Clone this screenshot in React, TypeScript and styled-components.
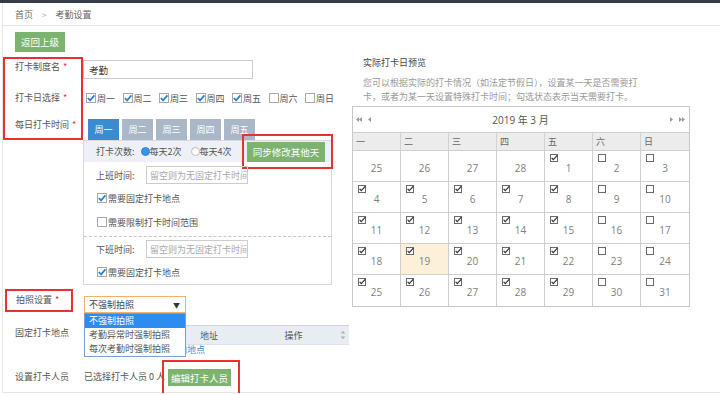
import React from 'react';
import styled, { createGlobalStyle } from 'styled-components';

const RED = '#e8322f';
const GREEN = '#7cb46f';

const GlobalStyle = createGlobalStyle`
  html, body { margin: 0; padding: 0; background: #fff; }
  body {
    font-family: "Noto Sans CJK SC", "Noto Sans", sans-serif;
    font-size: 9px;
    color: #555;
  }
  * { box-sizing: border-box; }
`;

const TopBar = styled.div`
  height: 3px;
  background: #363c48;
`;

const Frame = styled.div`
  margin-left: 2px;
  height: 390px;
  border-left: 1px solid #e6e6e6;
  border-bottom: 1px solid #e6e6e6;
`;

const Crumbs = styled.div`
  height: 23px;
  display: flex;
  align-items: center;
  gap: 9px;
  padding-left: 12px;
  border-bottom: 1px solid #e4e4e4;
  color: #666;
`;

const CrumbSep = styled.span`
  color: #aaa;
  font-size: 8px;
`;

const Main = styled.div`
  display: flex;
`;

const LeftCol = styled.div`
  width: 349px;
  flex: none;
`;

const RightCol = styled.div`
  flex: 1;
  padding-top: 30px;
`;

const GreenButton = styled.div<{ $w: number; $h: number }>`
  width: ${(p) => p.$w}px;
  height: ${(p) => p.$h}px;
  background: ${GREEN};
  color: #fff;
  font-size: 9.5px;
  display: flex;
  align-items: center;
  justify-content: center;
  flex: none;
`;

const BackButton = styled(GreenButton)`
  margin: 6px 0 0 12px;
`;

const FormGrid = styled.div`
  margin-top: 5px;
  display: grid;
  grid-template-columns: 80px 266px;
  grid-template-rows: 31px 31px 21px 145px 28px 47px 35px;
`;

const LabelMark = styled.div`
  grid-column: 1;
  grid-row: 1 / 4;
  border: 2px solid ${RED};
`;

const Label = styled.div<{ $row: number; $top: number }>`
  grid-column: 1;
  grid-row: ${(p) => p.$row};
  align-self: start;
  margin-top: ${(p) => p.$top}px;
  padding-left: 12px;
  line-height: 14px;
  white-space: nowrap;
`;

const Star = styled.span`
  color: ${RED};
  margin-left: 3px;
`;

const PhotoMark = styled.div`
  grid-column: 1;
  grid-row: 5;
  align-self: start;
  margin: 4px 0 0 2px;
  width: 68px;
  height: 23px;
  border: 2px solid ${RED};
  padding-left: 9px;
  line-height: 18px;
  white-space: nowrap;
`;

const NameInput = styled.div`
  grid-column: 2;
  grid-row: 1;
  align-self: start;
  margin-top: 3px;
  width: 170px;
  height: 19px;
  border: 1px solid #ccc;
  padding-left: 5px;
  display: flex;
  align-items: center;
  color: #333;
  font-size: 9.5px;
`;

const DayChecks = styled.div`
  grid-column: 2;
  grid-row: 2;
  align-self: start;
  margin: 3px 0 0 3px;
  height: 14px;
  display: flex;
  align-items: center;
`;

const DayItem = styled.label`
  width: 36.5px;
  flex: none;
  display: flex;
  align-items: center;
  gap: 1px;
  white-space: nowrap;
`;

const Tabs = styled.div`
  grid-column: 2;
  grid-row: 3;
  display: flex;
  gap: 3px;
  margin-left: 5px;
`;

const Tab = styled.div<{ $active?: boolean }>`
  width: 31px;
  height: 21px;
  background: ${(p) => (p.$active ? '#3b8bd0' : '#a9b7c6')};
  color: #fff;
  display: flex;
  align-items: center;
  justify-content: center;
`;

const Panel = styled.div`
  grid-column: 2;
  grid-row: 4;
  width: 249px;
  border: 1px solid #d9d9d9;
  display: flex;
  flex-direction: column;
`;

const CountRow = styled.div`
  height: 21px;
  flex: none;
  background: #edf1f7;
  display: flex;
  align-items: center;
  padding-left: 12px;
  white-space: nowrap;
`;

const Radios = styled.div`
  display: flex;
  align-items: center;
  gap: 9px;
  margin-left: 6px;
`;

const RadioItem = styled.label`
  display: flex;
  align-items: center;
`;

const RadioDot = styled.span<{ $on?: boolean }>`
  width: 9px;
  height: 9px;
  border-radius: 50%;
  border: 1px solid ${(p) => (p.$on ? '#2a86d8' : '#bdbdbd')};
  background: ${(p) => (p.$on ? '#3795e6' : '#fff')};
`;

const SyncMark = styled.div`
  margin-left: auto;
  margin-right: -2px;
  height: 35px;
  flex: none;
  padding: 6px 6px 5px 3px;
  border: 2px solid ${RED};
`;

const TimeRow = styled.div<{ $h: number }>`
  height: ${(p) => p.$h}px;
  flex: none;
  display: flex;
  align-items: center;
  padding-left: 12px;
`;

const TimeLabel = styled.span`
  width: 50px;
  flex: none;
`;

const TimeInput = styled.div`
  width: 102px;
  height: 18px;
  border: 1px solid #ccc;
  padding-left: 3px;
  display: flex;
  align-items: center;
  color: #aaa;
  white-space: nowrap;
  overflow: hidden;
`;

const CheckRow = styled.label<{ $h: number }>`
  height: ${(p) => p.$h}px;
  flex: none;
  display: flex;
  align-items: center;
  gap: 1px;
  padding-left: 13px;
`;

const Divider = styled.div`
  border-top: 1px dashed #c8c8c8;
`;

const SelectWrap = styled.div`
  grid-column: 2;
  grid-row: 5;
  align-self: end;
  position: relative;
  margin-left: 1px;
  width: 102px;
  height: 17px;
`;

const SelectBox = styled.div`
  height: 100%;
  border: 1px solid #f0b26b;
  display: flex;
  align-items: center;
  justify-content: space-between;
  padding: 0 5px 0 4px;
  color: #444;
`;

const Caret = styled.span`
  font-size: 7px;
  color: #333;
`;

const Dropdown = styled.div`
  position: absolute;
  top: 100%;
  left: 0;
  width: 102px;
  border: 1px solid #7d9fd6;
  background: #fff;
  z-index: 2;
`;

const DropItem = styled.div<{ $active?: boolean }>`
  height: 14px;
  line-height: 14px;
  padding-left: 4px;
  white-space: nowrap;
  background: ${(p) => (p.$active ? '#2d8cf0' : '#fff')};
  color: ${(p) => (p.$active ? '#fff' : '#555')};
`;

const LocationBlock = styled.div`
  grid-column: 2;
  grid-row: 6;
  margin-left: 1px;
  padding-top: 12px;
`;

const TableHead = styled.div`
  width: 265px;
  height: 20px;
  display: flex;
  align-items: center;
  background: #e8edf4;
  border-top: 1px solid #cfd6df;
  border-bottom: 1px solid #dde2ea;
  color: #555;
`;

const HeadCell = styled.div<{ $w: number }>`
  width: ${(p) => p.$w}px;
  flex: none;
  text-align: center;
`;

const ScrollArrows = styled.div`
  flex: 1;
  display: flex;
  justify-content: center;
`;

const AddLink = styled.div`
  padding-left: 85px;
  line-height: 9px;
  color: #3c8dcf;
`;

const PeopleRow = styled.div`
  grid-column: 2;
  grid-row: 7;
  margin-left: 1px;
  display: flex;
  align-items: flex-start;
`;

const PeopleText = styled.span`
  width: 78px;
  flex: none;
  margin-top: 10px;
  line-height: 14px;
  white-space: nowrap;
`;

const PeopleMark = styled.div`
  height: 35px;
  flex: none;
  padding: 7px 7px 7px 4px;
  border: 2px solid ${RED};
`;

const PreviewTitle = styled.div`
  padding-left: 11px;
  line-height: 14px;
  color: #444;
`;

const Desc = styled.div`
  margin-top: 6px;
  padding-left: 11px;
  width: 298px;
  line-height: 14px;
  color: #9a9a9a;
`;

const Calendar = styled.div`
  margin-top: 2px;
  width: 338px;
  border: 1px solid #c9c9c9;
`;

const CalHead = styled.div`
  height: 26px;
  display: flex;
  align-items: center;
  justify-content: space-between;
  padding: 0 4px 0 3px;
  border-bottom: 1px solid #cfcfcf;
`;

const CalTitle = styled.span`
  font-family: "Open Sans", "Noto Sans CJK SC", sans-serif;
  font-size: 10px;
  color: #555;
`;

const WeekRow = styled.div`
  display: grid;
  grid-template-columns: repeat(7, 1fr);
  height: 18px;
  background: #ececec;
  border-bottom: 1px solid #cfcfcf;
`;

const WeekCell = styled.div`
  padding-left: 3px;
  line-height: 17px;
  color: #666;
  border-right: 1px solid #d2d2d2;
  &:last-child { border-right: none; }
`;

const DaysGrid = styled.div`
  display: grid;
  grid-template-columns: repeat(7, 1fr);
  grid-auto-rows: 31px;
`;

const DayCell = styled.div<{ $today?: boolean; $lastCol?: boolean; $lastRow?: boolean }>`
  display: flex;
  flex-direction: column;
  background: ${(p) => (p.$today ? '#fdf0d9' : '#fff')};
  border-right: ${(p) => (p.$lastCol ? 'none' : '1px solid #cfcfcf')};
  border-bottom: ${(p) => (p.$lastRow ? 'none' : '1px solid #cfcfcf')};
`;

const BoxSlot = styled.div`
  height: 8px;
  margin: 3px 0 0 5px;
  display: flex;
`;

const DayNum = styled.div`
  text-align: center;
  line-height: 12px;
  font-family: "Open Sans", sans-serif;
  font-size: 10px;
  color: #808080;
`;

function TickBox({ on }: { on: boolean }) {
  return (
    <svg width="10" height="10" viewBox="0 0 10 10">
      <rect x="0.5" y="0.5" width="9" height="9" fill="#fff" stroke="#a9a9a9" />
      {on && <path d="M1.8 5 L4.1 7.4 L8.4 2.4" fill="none" stroke="#2b7fd6" strokeWidth="1.7" />}
    </svg>
  );
}

function MiniBox({ on }: { on: boolean }) {
  return (
    <svg width="8" height="8" viewBox="0 0 8 8">
      <rect x="0.5" y="0.5" width="7" height="7" fill="#fff" stroke="#6a6a6a" />
      {on && <path d="M1.6 3.8 L3.3 5.6 L7.4 1.2" fill="none" stroke="#333" strokeWidth="1.2" />}
    </svg>
  );
}

function NavArrows({ dir }: { dir: 'left' | 'right' }) {
  const left = (
    <svg width="18" height="7" viewBox="0 0 18 7">
      <path d="M0 3.5 L3 1 L3 6 Z M3 3.5 L6 1 L6 6 Z M12 3.5 L15 1 L15 6 Z" fill="#9a9a9a" />
    </svg>
  );
  const right = (
    <svg width="18" height="7" viewBox="0 0 18 7">
      <path d="M3 1 L6 3.5 L3 6 Z M12 1 L15 3.5 L12 6 Z M15 1 L18 3.5 L15 6 Z" fill="#9a9a9a" />
    </svg>
  );
  return dir === 'left' ? left : right;
}

const days = ['周一', '周二', '周三', '周四', '周五', '周六', '周日'];
const weekHead = ['一', '二', '三', '四', '五', '六', '日'];

type Cell = { n: number; box: boolean; on: boolean; today?: boolean };

const calendar: Cell[] = (() => {
  const cells: Cell[] = [25, 26, 27, 28].map((n) => ({ n, box: false, on: false }));
  for (let d = 1; d <= 31; d++) {
    const col = cells.length % 7;
    cells.push({ n: d, box: true, on: col < 5, today: d === 19 });
  }
  return cells;
})();

export default function App() {
  return (
    <>
      <GlobalStyle />
      <TopBar />
      <Frame>
        <Crumbs>
          <span>首页</span>
          <CrumbSep>&gt;</CrumbSep>
          <span>考勤设置</span>
        </Crumbs>
        <Main>
          <LeftCol>
            <BackButton $w={50} $h={20}>返回上级</BackButton>
            <FormGrid>
              <LabelMark />
              <Label $row={1} $top={3}>打卡制度名<Star>*</Star></Label>
              <Label $row={2} $top={3}>打卡日选择<Star>*</Star></Label>
              <Label $row={3} $top={-1}>每日打卡时间<Star>*</Star></Label>

              <NameInput>考勤</NameInput>

              <DayChecks>
                {days.map((d, i) => (
                  <DayItem key={d}>
                    <TickBox on={i < 5} />
                    {d}
                  </DayItem>
                ))}
              </DayChecks>

              <Tabs>
                {days.slice(0, 5).map((d, i) => (
                  <Tab key={d} $active={i === 0}>{d}</Tab>
                ))}
              </Tabs>

              <Panel>
                <CountRow>
                  打卡次数:
                  <Radios>
                    <RadioItem><RadioDot $on />每天2次</RadioItem>
                    <RadioItem><RadioDot />每天4次</RadioItem>
                  </Radios>
                  <SyncMark>
                    <GreenButton $w={78} $h={20}>同步修改其他天</GreenButton>
                  </SyncMark>
                </CountRow>
                <TimeRow $h={26}>
                  <TimeLabel>上班时间:</TimeLabel>
                  <TimeInput>留空则为无固定打卡时间</TimeInput>
                </TimeRow>
                <CheckRow $h={20}><TickBox on />需要固定打卡地点</CheckRow>
                <CheckRow $h={28}><TickBox on={false} />需要限制打卡时间范围</CheckRow>
                <Divider />
                <TimeRow $h={24}>
                  <TimeLabel>下班时间:</TimeLabel>
                  <TimeInput>留空则为无固定打卡时间</TimeInput>
                </TimeRow>
                <CheckRow $h={22}><TickBox on />需要固定打卡地点</CheckRow>
              </Panel>

              <PhotoMark>拍照设置<Star>*</Star></PhotoMark>
              <SelectWrap>
                <SelectBox>
                  不强制拍照
                  <Caret>▼</Caret>
                </SelectBox>
                <Dropdown>
                  <DropItem $active>不强制拍照</DropItem>
                  <DropItem>考勤异常时强制拍照</DropItem>
                  <DropItem>每次考勤时强制拍照</DropItem>
                </Dropdown>
              </SelectWrap>

              <Label $row={6} $top={13}>固定打卡地点</Label>
              <LocationBlock>
                <TableHead>
                  <HeadCell $w={83} />
                  <HeadCell $w={84}>地址</HeadCell>
                  <HeadCell $w={85}>操作</HeadCell>
                  <ScrollArrows>
                    <svg width="6" height="12" viewBox="0 0 6 12">
                      <path d="M3 2 L5.5 4.5 L0.5 4.5 Z M3 10 L5.5 7.5 L0.5 7.5 Z" fill="#b0b0b0" />
                    </svg>
                  </ScrollArrows>
                </TableHead>
                <AddLink>添加地点</AddLink>
              </LocationBlock>

              <Label $row={7} $top={10}>设置打卡人员</Label>
              <PeopleRow>
                <PeopleText>已选择打卡人员 0 人</PeopleText>
                <PeopleMark>
                  <GreenButton $w={63} $h={17}>编辑打卡人员</GreenButton>
                </PeopleMark>
              </PeopleRow>
            </FormGrid>
          </LeftCol>

          <RightCol>
            <PreviewTitle>实际打卡日预览</PreviewTitle>
            <Desc>
              您可以根据实际的打卡情况（如法定节假日），设置某一天是否需要打卡，或者为某一天设置特殊打卡时间；勾选状态表示当天需要打卡。
            </Desc>
            <Calendar>
              <CalHead>
                <NavArrows dir="left" />
                <CalTitle>2019 年 3 月</CalTitle>
                <NavArrows dir="right" />
              </CalHead>
              <WeekRow>
                {weekHead.map((w) => (
                  <WeekCell key={w}>{w}</WeekCell>
                ))}
              </WeekRow>
              <DaysGrid>
                {calendar.map((c, i) => (
                  <DayCell
                    key={i}
                    $today={c.today}
                    $lastCol={i % 7 === 6}
                    $lastRow={i >= 28}
                  >
                    <BoxSlot>{c.box && <MiniBox on={c.on} />}</BoxSlot>
                    <DayNum>{c.n}</DayNum>
                  </DayCell>
                ))}
              </DaysGrid>
            </Calendar>
          </RightCol>
        </Main>
      </Frame>
    </>
  );
}
